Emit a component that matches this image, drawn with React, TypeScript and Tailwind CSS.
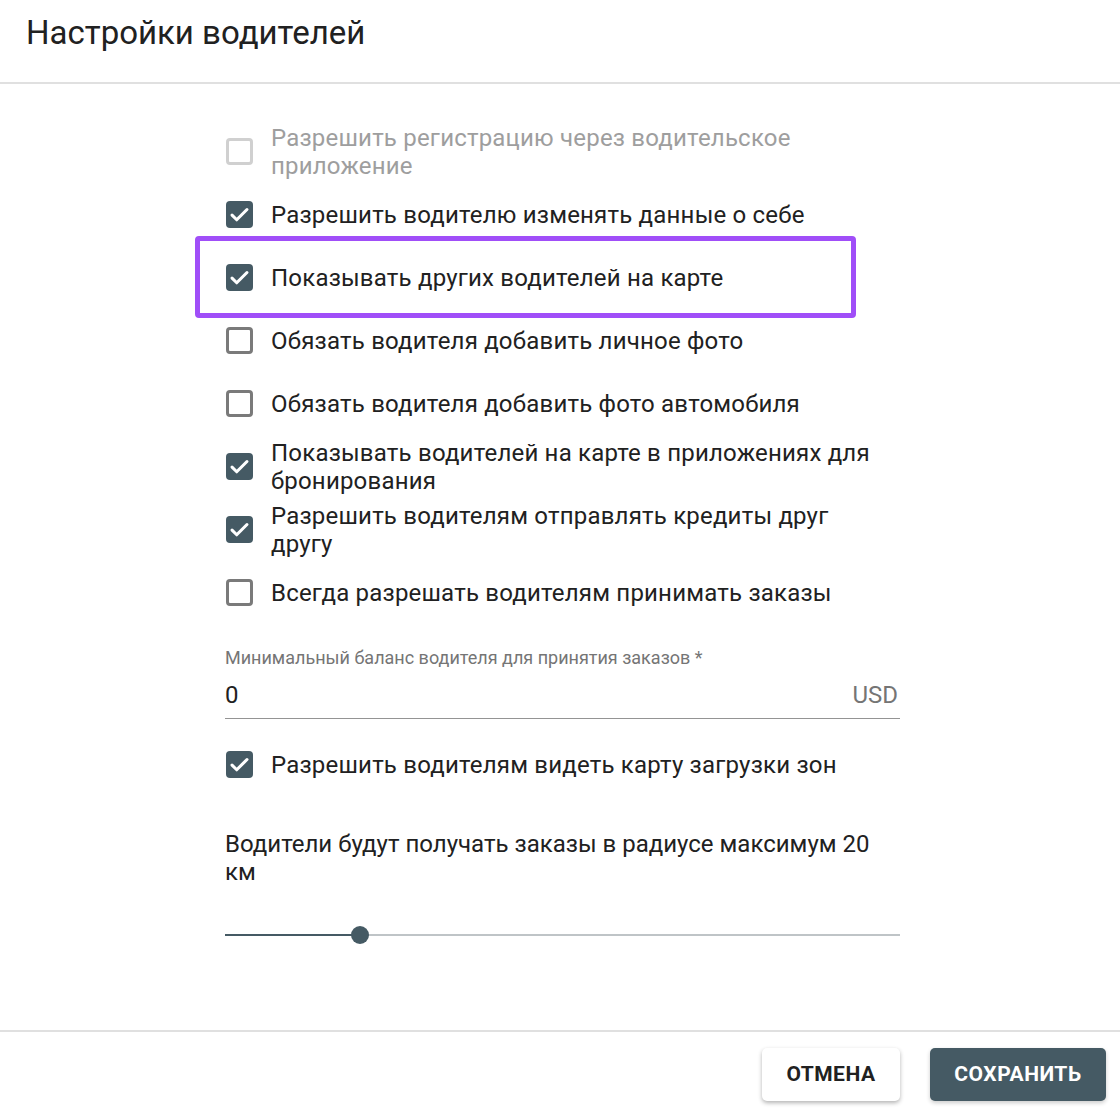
import { useState } from "react";

type Option = {
  label: string;
  checked: boolean;
  disabled?: boolean;
  highlighted?: boolean;
};

const options: Option[] = [
  { label: "Разрешить регистрацию через водительское приложение", checked: false, disabled: true },
  { label: "Разрешить водителю изменять данные о себе", checked: true },
  { label: "Показывать других водителей на карте", checked: true, highlighted: true },
  { label: "Обязать водителя добавить личное фото", checked: false },
  { label: "Обязать водителя добавить фото автомобиля", checked: false },
  { label: "Показывать водителей на карте в приложениях для бронирования", checked: true },
  { label: "Разрешить водителям отправлять кредиты друг другу", checked: true },
  { label: "Всегда разрешать водителям принимать заказы", checked: false },
];

function Checkbox({ checked, disabled }: { checked: boolean; disabled?: boolean }) {
  if (checked) {
    return (
      <span className="flex h-[27px] w-[27px] shrink-0 items-center justify-center rounded-[4px] bg-[#455a64]">
        <svg width="23" height="23" viewBox="0 0 24 24" aria-hidden="true">
          <path d="M4.2 12.6l4.9 4.9L19.8 6.8" fill="none" stroke="#fff" strokeWidth="3.2" strokeLinecap="round" strokeLinejoin="round" />
        </svg>
      </span>
    );
  }
  return (
    <span
      className={`h-[27px] w-[27px] shrink-0 rounded-[4px] border-[3px] ${
        disabled ? "border-[#d0d0d0]" : "border-[#7a7a7a]"
      }`}
    />
  );
}

function OptionRow({ option }: { option: Option }) {
  return (
    <div className="relative flex h-[63px] items-center gap-[18px] pl-[1px]">
      {option.highlighted ? (
        <div className="pointer-events-none absolute left-[-30px] top-[-10px] h-[82px] w-[661px] rounded-[4px] border-[5px] border-[#a04ef8]" />
      ) : null}
      <Checkbox checked={option.checked} disabled={option.disabled} />
      <span
        className={`max-w-[610px] text-[24px] leading-[28px] tracking-[0.2px] ${
          option.disabled ? "text-[#9e9e9e]" : "text-[#212121]"
        }`}
      >
        {option.label}
      </span>
    </div>
  );
}

export default function App() {
  const [radius] = useState(20);
  const percent = 20;

  return (
    <div className="flex h-[1114px] w-[1120px] flex-col bg-white font-['Roboto',_'Liberation_Sans',_sans-serif] text-[#212121]">
      <header className="flex h-[84px] shrink-0 items-start border-b-2 border-[#e0e0e0] px-[26px] pt-[13px]">
        <h1 className="text-[33px] leading-[40px] font-normal">Настройки водителей</h1>
      </header>

      <main className="flex-1">
        <div className="ml-[225px] w-[675px] pt-[36px]">
          {options.map((o) => (
            <OptionRow key={o.label} option={o} />
          ))}

          <div className="mt-[24px]">
            <label className="block text-[18px] leading-[20px] text-[#757575]">
              Минимальный баланс водителя для принятия заказов *
            </label>
            <div className="mt-[13px] flex items-center justify-between border-b border-[#949494] pb-[9px]">
              <span className="text-[24px] leading-[28px]">0</span>
              <span className="pr-[2px] text-[24px] leading-[28px] text-[#757575]">USD</span>
            </div>
          </div>

          <div className="mt-[14px]">
            <OptionRow option={{ label: "Разрешить водителям видеть карту загрузки зон", checked: true }} />
          </div>

          <p className="mt-[34px] max-w-[660px] text-[24px] leading-[28px]">
            Водители будут получать заказы в радиусе максимум {radius} км
          </p>

          <div className="relative mt-[40px] h-[18px]">
            <div className="absolute top-[8px] left-0 right-0 h-[2px] bg-[#bfc4c7]" />
            <div className="absolute top-[8px] left-0 h-[2px] bg-[#455a64]" style={{ width: `${percent}%` }} />
            <div
              className="absolute top-0 h-[18px] w-[18px] -translate-x-1/2 rounded-full bg-[#455a64]"
              style={{ left: `${percent}%` }}
            />
          </div>
        </div>
      </main>

      <footer className="flex h-[84px] shrink-0 items-start justify-end gap-[30px] border-t-2 border-[#e0e0e0] pt-[16px] pr-[14px]">
        <button className="h-[53px] w-[138px] rounded-[5px] bg-white text-[21px] font-bold tracking-[0.5px] text-[#212121] shadow-[0_2px_4px_rgba(0,0,0,0.3)]">
          ОТМЕНА
        </button>
        <button className="h-[53px] w-[176px] rounded-[5px] bg-[#455a64] text-[21px] font-bold tracking-[0.5px] text-white shadow-[0_2px_4px_rgba(0,0,0,0.2)]">
          СОХРАНИТЬ
        </button>
      </footer>
    </div>
  );
}
